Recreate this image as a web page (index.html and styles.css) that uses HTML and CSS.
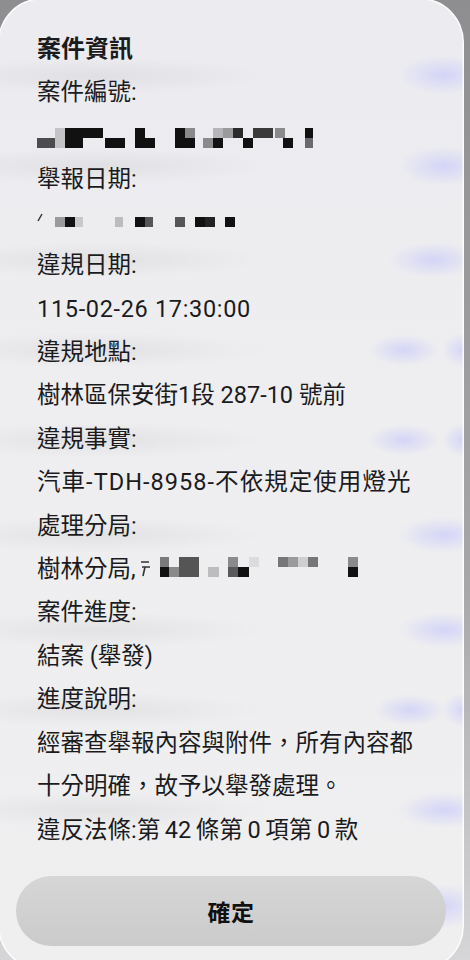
FILE: index.html
```html
<!DOCTYPE html>
<html lang="zh-Hant">
<head>
  <meta charset="UTF-8" />
  <meta name="viewport" content="width=device-width, initial-scale=1" />
  <title>案件資訊</title>
  <link rel="stylesheet" href="styles.css">
</head>
<body>
  <div class="sheet" role="dialog" aria-label="案件資訊">
    <div class="info">
      <p class="title">案件資訊</p>
      <p>案件編號:</p>
      <!-- redacted case number -->
      <svg class="redact" width="300" height="43" viewBox="0 0 300 43" aria-hidden="true">
        <rect x="0" y="23" width="18" height="10" fill="#4d4d4f"/>
        <rect x="18" y="13" width="10" height="20" fill="#c4c4c6"/>
        <rect x="28" y="13" width="38" height="10" fill="#111"/>
        <rect x="28" y="23" width="18" height="10" fill="#111"/>
        <rect x="68" y="23" width="20" height="10" fill="#111"/>
        <rect x="98" y="13" width="10" height="20" fill="#111"/>
        <rect x="108" y="23" width="10" height="10" fill="#111"/>
        <rect x="138" y="13" width="10" height="20" fill="#111"/>
        <rect x="148" y="13" width="10" height="10" fill="#8a8a8c"/>
        <rect x="148" y="23" width="10" height="10" fill="#111"/>
        <rect x="166" y="23" width="10" height="10" fill="#8a8a8c"/>
        <rect x="176" y="23" width="10" height="10" fill="#111"/>
        <rect x="176" y="13" width="10" height="10" fill="#b5b5b7"/>
        <rect x="186" y="13" width="10" height="10" fill="#9a9a9c"/>
        <rect x="196" y="13" width="10" height="10" fill="#2a2a2a"/>
        <rect x="206" y="23" width="10" height="10" fill="#111"/>
        <rect x="216" y="13" width="20" height="10" fill="#3a3a3a"/>
        <rect x="238" y="13" width="10" height="10" fill="#8a8a8c"/>
        <rect x="246" y="23" width="10" height="10" fill="#111"/>
        <rect x="268" y="13" width="8" height="10" fill="#111"/>
        <rect x="268" y="23" width="8" height="10" fill="#6a6a6c"/>
      </svg>
      <p>舉報日期:</p>
      <!-- redacted report date -->
      <svg class="redact" width="300" height="43" viewBox="0 0 300 43" aria-hidden="true">
        <path d="M1 20 L5 13" stroke="#333" stroke-width="1.5"/>
        <rect x="18" y="16" width="10" height="10" fill="#9a9a9c"/>
        <rect x="28" y="16" width="10" height="10" fill="#111"/>
        <rect x="38" y="16" width="8" height="10" fill="#c8c8ca"/>
        <rect x="78" y="16" width="8" height="10" fill="#bcbcbe"/>
        <rect x="98" y="16" width="10" height="10" fill="#111"/>
        <rect x="108" y="16" width="8" height="10" fill="#555"/>
        <rect x="138" y="16" width="10" height="10" fill="#555"/>
        <rect x="158" y="16" width="10" height="10" fill="#111"/>
        <rect x="168" y="16" width="10" height="10" fill="#222"/>
        <rect x="188" y="16" width="10" height="10" fill="#111"/>
      </svg>
      <p>違規日期:</p>
      <p class="date">115-02-26 17:30:00</p>
      <p>違規地點:</p>
      <p>樹林區保安街1段 287-10 號前</p>
      <p>違規事實:</p>
      <p class="plate">汽車-TDH-8958-不依規定使用燈光</p>
      <p>處理分局:</p>
      <p>樹林分局,<svg class="redact-inline" width="230" height="43" viewBox="0 0 230 43" aria-hidden="true">
          <path d="M5 14 H13 M6 19 H14 M9 19 L7 28" stroke="#333" stroke-width="1.6" fill="none"/>
          <rect x="24" y="9" width="9" height="10" fill="#7a7a7c"/>
          <rect x="24" y="19" width="9" height="10" fill="#111"/>
          <rect x="33" y="19" width="10" height="10" fill="#8a8a8c"/>
          <rect x="43" y="9" width="20" height="20" fill="#555"/>
          <rect x="72" y="19" width="11" height="10" fill="#bdbdbf"/>
          <rect x="92" y="9" width="10" height="10" fill="#8a8a8c"/>
          <rect x="92" y="19" width="10" height="10" fill="#5a5a5c"/>
          <rect x="102" y="19" width="11" height="10" fill="#111"/>
          <rect x="113" y="9" width="10" height="10" fill="#dcdcde"/>
          <rect x="142" y="9" width="10" height="10" fill="#767678"/>
          <rect x="152" y="9" width="10" height="10" fill="#9a9a9c"/>
          <rect x="162" y="9" width="10" height="10" fill="#cfcfd1"/>
          <rect x="172" y="9" width="10" height="10" fill="#767678"/>
          <rect x="212" y="9" width="10" height="10" fill="#8a8a8c"/>
          <rect x="212" y="19" width="10" height="10" fill="#111"/>
        </svg></p>
      <p>案件進度:</p>
      <p>結案 (舉發)</p>
      <p>進度說明:</p>
      <p>經審查舉報內容與附件，所有內容都十分明確，故予以舉發處理。</p>
      <p class="law">違反法條:第 42 條第 0 項第 0 款</p>
    </div>
    <button type="button" class="confirm">確定</button>
  </div>
</body>
</html>
```

FILE: styles.css
```css
:root {
  --outside: #8e8e90;
  --sheet: #eeeef0;
  --ink: #1b1b1d;
  --btn-top: #d6d6d7;
  --btn-bottom: #cbcbcc;
  --lilac: rgba(204, 204, 250, 0.75);
  --smudge: rgba(0, 0, 0, 0.05);
}

html, body {
  margin: 0;
  height: 100%;
  overflow: hidden;
}
body {
  background: linear-gradient(var(--outside), #a6a6a8 60%, #d6d6d8);
  font-family: Roboto, "Noto Sans CJK TC", sans-serif;
  color: var(--ink);
}

/* the bottom sheet */
.sheet {
  box-sizing: border-box;
  width: 466px;
  height: 972px;
  margin: -2px 0 0 -2px;
  padding: 30px 18px 0;
  border-radius: 44px;
  box-shadow: inset 0 0 0 1.5px rgba(255, 255, 255, 0.85);
  /* blurred list showing through the glass */
  background:
    radial-gradient(46px 20px at 446px 77px, var(--lilac), transparent),
    radial-gradient(46px 20px at 446px 168px, var(--lilac), transparent),
    radial-gradient(46px 18px at 436px 262px, var(--lilac), transparent),
    radial-gradient(36px 16px at 406px 352px, var(--lilac), transparent),
    radial-gradient(22px 18px at 466px 352px, var(--lilac), transparent),
    radial-gradient(36px 16px at 406px 442px, var(--lilac), transparent),
    radial-gradient(22px 18px at 466px 442px, var(--lilac), transparent),
    radial-gradient(46px 18px at 446px 537px, var(--lilac), transparent),
    radial-gradient(46px 18px at 446px 632px, var(--lilac), transparent),
    radial-gradient(36px 16px at 412px 712px, var(--lilac), transparent),
    radial-gradient(22px 18px at 466px 712px, var(--lilac), transparent),
    radial-gradient(46px 18px at 446px 812px, var(--lilac), transparent),
    radial-gradient(40px 22px at 446px 908px, var(--lilac), transparent),
    radial-gradient(170px 18px at 100px 78px, var(--smudge), transparent),
    radial-gradient(170px 18px at 100px 168px, var(--smudge), transparent),
    radial-gradient(170px 18px at 100px 262px, var(--smudge), transparent),
    radial-gradient(170px 18px at 100px 352px, var(--smudge), transparent),
    radial-gradient(170px 18px at 100px 442px, var(--smudge), transparent),
    radial-gradient(170px 18px at 100px 537px, var(--smudge), transparent),
    radial-gradient(170px 18px at 100px 632px, var(--smudge), transparent),
    radial-gradient(170px 18px at 100px 712px, var(--smudge), transparent),
    radial-gradient(170px 18px at 100px 812px, var(--smudge), transparent),
    linear-gradient(#ebebf0, var(--sheet) 35%, #efeff0);
}

.info {
  padding: 0 21px;
}
.info p {
  margin: 0;
  font-size: 23.5px;
  line-height: 43.4px;
}
.info .title {
  font-size: 24px;
  font-weight: 700;
}
/* latin runs sit a little wider in the original font */
.info .date {
  letter-spacing: 0.67px;
}
.info .plate {
  letter-spacing: 1.05px;
}
.info .law {
  word-spacing: -1.2px;
}

.redact {
  display: block;
}
.redact-inline {
  vertical-align: top;
}

.confirm {
  display: block;
  width: 100%;
  height: 70px;
  margin-top: 24px;
  border: none;
  border-radius: 35px;
  background: linear-gradient(var(--btn-top), var(--btn-bottom));
  font-family: "Noto Sans CJK TC", sans-serif;
  font-size: 23px;
  font-weight: 600;
  color: #111;
  letter-spacing: 0.02em;
}
```
